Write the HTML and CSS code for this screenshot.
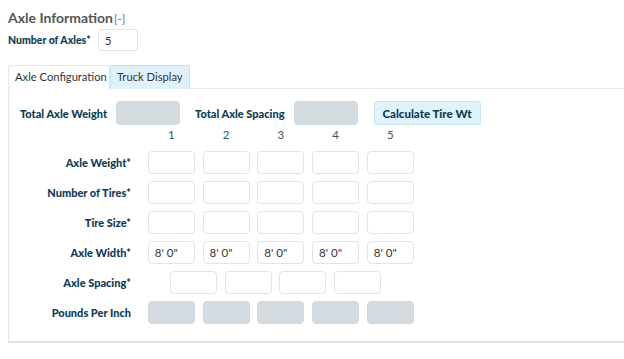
FILE: index.html
```html
<!DOCTYPE html>
<html>
<head>
<meta charset="utf-8">
<link rel="stylesheet" href="styles.css">
</head>
<body>
<div class="page">
  <h2 class="title">Axle Information<span class="toggle">[-]</span></h2>
  <div class="axles-row">
    <label class="lbl lbl-sm">Number of Axles*</label>
    <div class="inp small">5</div>
  </div>
  <div class="tabs">
    <div class="tab active">Axle Configuration</div>
    <div class="tab">Truck Display</div>
  </div>
  <div class="panel">
    <div class="totals">
      <span class="lbl">Total Axle Weight</span>
      <div class="box ro"></div>
      <span class="lbl t2">Total Axle Spacing</span>
      <div class="box ro"></div>
      <button class="calc">Calculate Tire Wt</button>
    </div>
    <div class="grid">
      <div></div>
      <div class="num">1</div><div class="num">2</div><div class="num">3</div><div class="num">4</div><div class="num">5</div>

      <div class="lbl rl">Axle Weight*</div>
      <div class="inp"></div><div class="inp"></div><div class="inp"></div><div class="inp"></div><div class="inp"></div>

      <div class="lbl rl">Number of Tires*</div>
      <div class="inp"></div><div class="inp"></div><div class="inp"></div><div class="inp"></div><div class="inp"></div>

      <div class="lbl rl">Tire Size*</div>
      <div class="inp"></div><div class="inp"></div><div class="inp"></div><div class="inp"></div><div class="inp"></div>

      <div class="lbl rl">Axle Width*</div>
      <div class="inp">8' 0"</div><div class="inp">8' 0"</div><div class="inp">8' 0"</div><div class="inp">8' 0"</div><div class="inp">8' 0"</div>

      <div class="lbl rl">Axle Spacing*</div>
      <div class="spacing">
        <div class="inp"></div><div class="inp"></div><div class="inp"></div><div class="inp"></div>
      </div>

      <div class="lbl rl">Pounds Per Inch</div>
      <div class="inp ro"></div><div class="inp ro"></div><div class="inp ro"></div><div class="inp ro"></div><div class="inp ro"></div>
    </div>
  </div>
</div>
</body>
</html>
```
FILE: styles.css
```css
* { box-sizing: border-box; }
body {
  margin: 0;
  background: #fff;
  font-family: "Lato", "Noto Sans", sans-serif;
  color: #333;
}
.page { padding: 9px 0 0 8px; }
.title {
  margin: 0;
  font-size: 14px;
  font-weight: bold;
  color: #555;
  line-height: 18px;
}
.toggle {
  font-size: 11.5px;
  font-weight: normal;
  color: #4f7898;
  margin-left: 1px;
}
.lbl {
  font-size: 11px;
  font-weight: 900;
  color: #0d3b53;
  white-space: nowrap;
}
.lbl-sm { font-size: 10.5px; }
.axles-row {
  display: flex;
  align-items: center;
  margin-top: 1px;
  gap: 7px;
}
.inp {
  width: 47px;
  height: 23px;
  border: 1px solid #dde6eb;
  border-radius: 4px;
  background: #fff;
  font-size: 11.5px;
  color: #333;
  padding-left: 6px;
  line-height: 21px;
}
.inp.small { width: 40px; height: 22px; }
.inp.ro, .box.ro {
  background: #d4dce1;
  border-color: #cfd8dd;
}
.tabs {
  display: flex;
  margin-top: 14px;
  position: relative;
  z-index: 1;
  margin-bottom: -1px;
}
.tab {
  height: 24px;
  line-height: 22px;
  padding: 0 6px 0 6px;
  font-size: 11.2px;
  color: #333;
  border: 1px solid #bfe3f2;
  border-bottom: none;
  background: #dff2fb;
  border-radius: 2px 2px 0 0;
  white-space: nowrap;
}
.tab.active {
  background: #fff;
  border-color: #e2e8ec;
  width: 102px;
}
.panel {
  border-top: 1px solid #e2e8ec;
  border-left: 1px solid #e2e8ec;
  border-bottom: 2px solid #dce4e8;
  height: 255px;
  padding: 12px 0 0 11px;
}
.totals {
  display: flex;
  align-items: center;
}
.box {
  width: 64px;
  height: 24px;
  border-radius: 4px;
  border: 1px solid #cfd8dd;
  margin-left: 9px;
}
.t2 { margin-left: 15px; }
.calc {
  margin-left: 16px;
  height: 24px;
  width: 107px;
  border: 1px solid #c6e5f2;
  background: #e0f3fb;
  border-radius: 3px;
  font-family: inherit;
  font-size: 11.5px;
  font-weight: 900;
  color: #0d3b53;
  padding: 0;
}
.grid {
  display: grid;
  grid-template-columns: 131px repeat(5, 47px);
  column-gap: 7.75px;
  row-gap: 7px;
  margin-left: -11px;
  margin-top: 0;
  align-items: center;
}
.grid .rl {
  text-align: right;
  width: 122px;
}
.num {
  text-align: center;
  font-size: 11.5px;
  color: #3b5566;
  height: 19px;
  line-height: 19px;
}
.spacing {
  grid-column: 2 / span 5;
  display: flex;
  gap: 7.75px;
  padding-left: 22px;
}
```
